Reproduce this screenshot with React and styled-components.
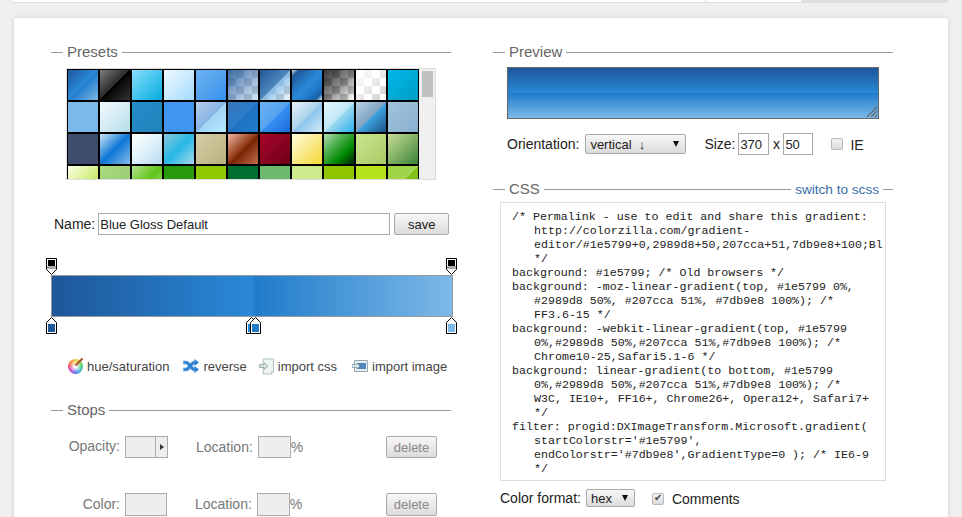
import React from 'react'
import styled, { createGlobalStyle } from 'styled-components'

const GlobalStyle = createGlobalStyle`
html, body {
	margin: 0;
	height: 517px;
	overflow: hidden;
	background: #efefef;
	font-family: "Liberation Sans", Arial, sans-serif;
	font-size: 14px;
	color: #222;
}
* { box-sizing: border-box; }
`

const checker = '#fff conic-gradient(#ccc 25%, #fff 0 50%, #ccc 0 75%, #fff 0) 0 0 / 16px 16px'

const presets = [
	'linear-gradient(135deg,#1e5799 0%,#2989d8 50%,#207cca 51%,#7db9e8 100%)',
	'linear-gradient(135deg,#7d7e7d 0%,#2a2a2a 49%,#000 50%,#0e0e0e 60%,#333 100%)',
	'linear-gradient(135deg,#87e0fd 0%,#53cbf1 40%,#05abe0 100%)',
	'linear-gradient(135deg,#f0f9ff 0%,#cbebff 47%,#a1dbff 100%)',
	'linear-gradient(135deg,#6db3f2 0%,#54a3ee 50%,#3690f0 100%)',
	`linear-gradient(135deg,rgba(30,87,153,.9) 0%,rgba(70,120,180,.6) 50%,rgba(125,185,232,.3) 100%),${checker}`,
	`linear-gradient(135deg,rgba(30,87,153,1) 0%,rgba(70,130,185,.95) 50%,rgba(125,185,232,.85) 51%,rgba(125,185,232,.1) 100%),${checker}`,
	'linear-gradient(135deg,#e4eef8 0%,#1e5799 12%,#2989d8 50%,#207cca 70%,#1a5fa5 88%,#eaf3fb 100%)',
	`linear-gradient(135deg,rgba(0,0,0,.8) 0%,rgba(0,0,0,.45) 50%,rgba(0,0,0,0) 100%),${checker}`,
	`linear-gradient(135deg,#fff 0%,rgba(255,255,255,.6) 50%,rgba(255,255,255,0) 100%),${checker}`,
	'linear-gradient(135deg,#00b7ea 0%,#009ec3 100%)',

	'linear-gradient(135deg,#7db9e8 0%,#7db9e8 100%)',
	'linear-gradient(135deg,#f3fbff 0%,#d5ecf3 50%,#b5dbe8 100%)',
	'linear-gradient(135deg,#258dc8 0%,#2183bd 100%)',
	'linear-gradient(135deg,#4096ee 0%,#4096ee 100%)',
	'linear-gradient(135deg,#b4cfe9 0%,#88b4e6 50%,#a0d4f6 51%,#b7eafb 100%)',
	'linear-gradient(135deg,#3b76b4 0%,#2a7ccb 50%,#1f72c4 51%,#1f7acc 100%)',
	'linear-gradient(135deg,#6db3f2 0%,#54a3ee 50%,#3690f0 51%,#1e69de 100%)',
	'linear-gradient(135deg,#ebf1f6 0%,#abd3ee 50%,#89c3eb 51%,#d5ebfb 100%)',
	'linear-gradient(135deg,#e4f5fc 0%,#bfe8f9 50%,#9fd8ef 51%,#2ab0ed 100%)',
	'linear-gradient(135deg,#bdd2e2 0%,#7ea3c5 50%,#3ea5e5 51%,#1a4f80 100%)',
	'linear-gradient(135deg,#a3c5dd 0%,#88b0d0 100%)',

	'#3f4c6b',
	'linear-gradient(135deg,#d0e4f7 0%,#73b1e7 24%,#0a77d5 50%,#539fe1 79%,#87bcea 100%)',
	'linear-gradient(135deg,#fff 0%,#dff1fb 50%,#b8d8f0 100%)',
	'linear-gradient(135deg,#88c8dc 0%,#28b8e6 50%,#a8d8e8 100%)',
	'linear-gradient(135deg,#d6cfa6 0%,#b9b17e 100%)',
	'linear-gradient(135deg,#f0b7a1 0%,#8c3310 50%,#752201 51%,#bf6e4e 100%)',
	'linear-gradient(135deg,#a90329 0%,#8f0222 44%,#6d0019 100%)',
	'linear-gradient(135deg,#fffde0 0%,#f9e98a 50%,#f5d936 100%)',
	'linear-gradient(135deg,#b4ddb4 0%,#83c783 17%,#52b152 33%,#008a00 67%,#005700 83%,#002400 100%)',
	'linear-gradient(135deg,#c9e58e 0%,#aacc66 100%)',
	'linear-gradient(135deg,#c9de96 0%,#8ab66b 44%,#398235 100%)',

	'linear-gradient(135deg,#f8ffe8 0%,#e3f5ab 33%,#b7df2d 100%)',
	'linear-gradient(135deg,#a9db80 0%,#96c56f 100%)',
	'linear-gradient(135deg,#b4e391 0%,#61c419 50%,#b4e391 100%)',
	'#299a0b',
	'#8fc800',
	'#006e2e',
	'#6db96f',
	'#cdeb8b',
	'#8fc400',
	'#b4e31c',
	'linear-gradient(135deg,#9dd53a 0%,#a1d54f 50%,#80c217 51%,#7cbc0a 100%)',
]

const barGradient = '#1e5799 0%,#2989d8 50%,#207cca 51%,#7db9e8 100%'

const opacityStops = [0, 100]
const colorStops = [
	{ at: 0, color: '#1e5799' },
	{ at: 50, color: '#2989d8' },
	{ at: 51, color: '#207cca' },
	{ at: 100, color: '#7db9e8' },
]

const cssRules = [
	"/* Permalink - use to edit and share this gradient: http://colorzilla.com/gradient-editor/#1e5799+0,2989d8+50,207cca+51,7db9e8+100;Blue+Gloss+Default */",
	'background: #1e5799; /* Old browsers */',
	'background: -moz-linear-gradient(top, #1e5799 0%, #2989d8 50%, #207cca 51%, #7db9e8 100%); /* FF3.6-15 */',
	'background: -webkit-linear-gradient(top, #1e5799 0%,#2989d8 50%,#207cca 51%,#7db9e8 100%); /* Chrome10-25,Safari5.1-6 */',
	'background: linear-gradient(to bottom, #1e5799 0%,#2989d8 50%,#207cca 51%,#7db9e8 100%); /* W3C, IE10+, FF16+, Chrome26+, Opera12+, Safari7+ */',
	"filter: progid:DXImageTransform.Microsoft.gradient( startColorstr='#1e5799', endColorstr='#7db9e8',GradientType=0 ); /* IE6-9 */",
]

const OpacityStop = ({ at }) => (
	<TopStop $at = {at} width = "11" height = "17" viewBox = "0 0 11 17">
		<path d = "M.5.5h10v11l-5 5-5-5z" fill = "#fff" stroke = "#000"/>
		<path d = "M2 2h7v6H2z" fill = "#000"/>
		<path d = "M1 8h9v3H1z" fill = "#aaa"/>
	</TopStop>
)

const ColorStop = ({ at, color }) => (
	<BottomStop $at = {at} width = "11" height = "17" viewBox = "0 0 11 17">
		<path d = "M.5 16.5v-11l5-5 5 5v11z" fill = "#fff" stroke = "#000"/>
		<path d = "M2 7h7v8H2z" fill = {color}/>
	</BottomStop>
)

const App = () => {
	return (
		<>
			<GlobalStyle/>
			<TopBar>
				<TopTab $width = {692}/>
				<TopTab $width = {96}/>
				<TopFill/>
			</TopBar>
			<Card>
				<Column>
					<SectionTitle><span>Presets</span></SectionTitle>
					<PresetBox>
						<PresetGrid>
							{presets.map((bg, i) => <Swatch key = {i} $bg = {bg}/>)}
						</PresetGrid>
						<PresetScroll><PresetThumb/></PresetScroll>
					</PresetBox>

					<NameRow>
						<label>Name:</label>
						<NameInput defaultValue = "Blue Gloss Default"/>
						<Button $width = {55}>save</Button>
					</NameRow>

					<Editor>
						{opacityStops.map(at => <OpacityStop key = {at} at = {at}/>)}
						<Bar/>
						{colorStops.map(s => <ColorStop key = {s.at} at = {s.at} color = {s.color}/>)}
					</Editor>

					<Actions>
						<Action $left = {17}>
							<HueIcon/>
							hue/saturation
						</Action>
						<Action $left = {14}>
							<svg width = "16" height = "14" viewBox = "0 0 16 14">
								<g fill = "none" stroke = "#9cc8ee" strokeWidth = "4">
									<path d = "M0 3.500h3c3.500 0 5 7 8.500 7H13"/>
									<path d = "M0 10.500h3c3.500 0 5-7 8.500-7H13"/>
								</g>
								<g fill = "none" stroke = "#2f80d4" strokeWidth = "2.600">
									<path d = "M.5 3.500H3c3.500 0 5 7 8.500 7H13"/>
									<path d = "M.5 10.500H3c3.500 0 5-7 8.500-7H13"/>
								</g>
								<path d = "M11.500 0 16 3.500 11.500 7zM11.500 7 16 10.500 11.500 14z" fill = "#2f80d4"/>
							</svg>
							reverse
						</Action>
						<Action $left = {12}>
							<svg width = "15" height = "17" viewBox = "0 0 16 17">
								<path d = "M4.500.5h11v14h-2v2h-9z" fill = "#eef3f3" stroke = "#a9bdbd"/>
								<path d = "M.5 6.500h5V4.500l4 3.500-4 3.500v-2h-5z" fill = "#dfe9e6" stroke = "#8ea8a4"/>
							</svg>
							import css
						</Action>
						<Action $left = {15}>
							<svg width = "16" height = "12" viewBox = "0 0 16 12">
								<path d = "M2.500.5h13v11h-13z" fill = "#e8eef2" stroke = "#9aaab5"/>
								<path d = "M5 3h9v6H5z" fill = "#4f86c0"/>
								<path d = "M0 4.500h5V3l3 3-3 3V7.500H0z" fill = "#dce8ee" stroke = "#5f7f95" strokeWidth = ".6"/>
							</svg>
							import image
						</Action>
					</Actions>

					<StopsTitle><span>Stops</span></StopsTitle>
					<StopRow>
						<StopLabel>Opacity:</StopLabel>
						<OpacityBox><OpacityArrow/></OpacityBox>
						<LocationLabel>Location:</LocationLabel>
						<LocationBox/>
						<Unit>%</Unit>
						<DeleteButton>delete</DeleteButton>
					</StopRow>
					<ColorRow>
						<StopLabel>Color:</StopLabel>
						<ColorBox/>
						<LocationLabel>Location:</LocationLabel>
						<LocationBox/>
						<Unit>%</Unit>
						<DeleteButton>delete</DeleteButton>
					</ColorRow>
				</Column>

				<Column>
					<SectionTitle><span>Preview</span></SectionTitle>
					<Preview>
						<svg width = "12" height = "12" viewBox = "0 0 12 12">
							<path d = "M1 11 11 1M5 11l6-6M9 11l2-2" stroke = "#666" strokeWidth = "1.100" fill = "none"/>
						</svg>
					</Preview>

					<OptionsRow>
						<label>Orientation:</label>
						<SelectWrap $width = {101} $left = {6} $top = {7}>
							<Select defaultValue = "vertical">
								<option value = "vertical">vertical &nbsp;↓</option>
							</Select>
						</SelectWrap>
						<SizeLabel>Size:</SizeLabel>
						<SizeInput $width = {31} defaultValue = "370"/>
						<SizeSep>x</SizeSep>
						<SizeInput $width = {30} defaultValue = "50"/>
						<IeCheck type = "checkbox"/>
						<CheckLabel>IE</CheckLabel>
					</OptionsRow>

					<CssTitle>
						<span>CSS</span>
						<SwitchLink href = "#">switch to scss</SwitchLink>
					</CssTitle>
					<CssBox>
						{cssRules.map((rule, i) => <CssRule key = {i}>{rule}</CssRule>)}
					</CssBox>

					<FormatRow>
						<label>Color format:</label>
						<SelectWrap $width = {49} $left = {5} $top = {6}>
							<Select defaultValue = "hex">
								<option value = "hex">hex</option>
							</Select>
						</SelectWrap>
						<CommentsCheck type = "checkbox" defaultChecked/>
						<CheckLabel>Comments</CheckLabel>
					</FormatRow>
				</Column>
			</Card>
		</>
	)
}

const TopBar = styled.div`
display: flex;
height: 3px;
margin: 0 14px;
`

const TopTab = styled.div`
width: ${p => p.$width}px;
background: #fff;
border-right: 1px solid #ddd;
border-bottom: 1px solid #ddd;
`

const TopFill = styled.div`
flex: 1;
background: #e0e0e0;
`

const Card = styled.div`
display: grid;
grid-template-columns: 400px 400px;
column-gap: 42px;
align-items: start;
height: 600px;
margin: 15px 14px 0;
padding: 26px 0 0 37px;
background: #fff;
border-radius: 2px;
box-shadow: 0 0 4px rgba(0, 0, 0, .16);
`

const Column = styled.div`
display: flex;
flex-direction: column;
`

//Titres de section

const SectionTitle = styled.div`
display: flex;
align-items: center;
height: 16px;
font-size: 15px;
color: #666;

> span {
	margin-top: -2px;
}
&::before {
	content: '';
	width: 12px;
	height: 1px;
	margin-right: 4px;
	background: #999;
}
&::after {
	content: '';
	flex: 1;
	height: 1px;
	margin-left: 4px;
	background: #999;
}
`

const StopsTitle = styled(SectionTitle)`
margin-top: 28px;
`

const CssTitle = styled(SectionTitle)`
margin-top: 26px;

&::after {
	flex: 0 0 10px;
}
`

const SwitchLink = styled.a`
display: flex;
flex: 1;
align-items: center;
margin-left: 4px;
font-size: 13.6px;
color: #3a6ea8;
text-decoration: none;

&::before {
	content: '';
	flex: 1;
	height: 1px;
	margin-right: 4px;
	background: #999;
}
`

//Presets

const PresetBox = styled.div`
display: flex;
width: 370px;
height: 112px;
margin: 8px 0 0 15px;
border: 1px solid #ddd;
overflow: hidden;
`

const PresetGrid = styled.div`
display: grid;
grid-template-columns: repeat(11, 30px);
grid-auto-rows: 30px;
gap: 2px;
width: 352px;
padding: 1px 0 0 1px;
margin-bottom: -30px;
background: #000;
`

const Swatch = styled.div`
background: ${p => p.$bg};
`

const PresetScroll = styled.div`
flex: 1;
padding: 2px 2px 0 3px;
background: #f0f0f0;
`

const PresetThumb = styled.div`
height: 26px;
background: #c1c1c1;
`

//Nom

const NameRow = styled.div`
display: flex;
align-items: center;
height: 22px;
margin-top: 33px;
padding-left: 3px;
`

const TextInput = styled.input`
height: 22px;
padding: 0 1px;
border: 1px solid #aaa;
background: #fff;
font: 13px "Liberation Sans", Arial, sans-serif;
color: #222;
outline: none;
`

const NameInput = styled(TextInput)`
width: 292px;
margin: 0 4px 0 3px;
`

const Button = styled.button`
width: ${p => p.$width}px;
height: 22px;
padding: 0;
border: 1px solid #aaa;
border-radius: 2px;
background: linear-gradient(#f7f7f7, #dcdcdc);
font: 13px "Liberation Sans", Arial, sans-serif;
color: #222;
`

//Barre de dégradé

const Editor = styled.div`
position: relative;
width: 402px;
height: 76px;
margin-top: 23px;
padding-top: 17px;
`

const Bar = styled.div`
height: 42px;
border: 1px solid #999;
background: linear-gradient(to right, ${barGradient});
`

const TopStop = styled.svg`
position: absolute;
top: 0;
left: ${p => p.$at * 4 - 5}px;
display: block;
`

const BottomStop = styled.svg`
position: absolute;
bottom: 0;
left: ${p => p.$at * 4 - 5}px;
display: block;
`

const Actions = styled.div`
display: flex;
align-items: center;
height: 16px;
margin-top: 24px;
`

const Action = styled.a`
display: flex;
align-items: center;
gap: 4px;
margin-left: ${p => p.$left}px;
font-size: 13px;
color: #444;
white-space: nowrap;
`

const HueIcon = styled.span`
position: relative;
width: 15px;
height: 15px;
border-radius: 50%;
background:
	radial-gradient(circle, #fff 0 10%, transparent 60%),
	conic-gradient(#f6d34a, #9bd53f, #3fc97a, #3fb7e0, #5b6fe0, #c44fd0, #e8507a, #f08a3a, #f6d34a);

&::after {
	content: '';
	position: absolute;
	top: 2px;
	left: 6px;
	width: 10px;
	height: 2px;
	background: #a8503a;
	transform: rotate(-45deg);
}
`

//Stops

const StopRow = styled.div`
display: flex;
align-items: center;
height: 22px;
margin-top: 18px;
padding-right: 14px;
color: #777;
`

const ColorRow = styled(StopRow)`
height: 23px;
margin-top: 35px;

& > label, & > span {
	margin-top: -2px;
}
`

const StopLabel = styled.label`
width: 69px;
margin: -2px 5px 0 0;
text-align: right;
`

const EmptyBox = styled.div`
height: 100%;
border: 1px solid #aaa;
background: #eee;
`

const OpacityBox = styled(EmptyBox)`
display: flex;
justify-content: flex-end;
width: 43px;
`

const OpacityArrow = styled.span`
display: flex;
align-items: center;
justify-content: center;
width: 12px;
border-left: 1px solid #aaa;

&::after {
	content: '';
	border-left: 4px solid #333;
	border-top: 3px solid transparent;
	border-bottom: 3px solid transparent;
}
`

const ColorBox = styled(EmptyBox)`
width: 42px;
`

const LocationLabel = styled.label`
margin: 0 5px 0 28px;
`

const LocationBox = styled(EmptyBox)`
width: 33px;
`

const Unit = styled.span``

const DeleteButton = styled(Button)`
width: 51px;
height: 100%;
margin-left: auto;
color: #888;
`

//Preview

const Preview = styled.div`
display: flex;
align-items: flex-end;
justify-content: flex-end;
width: 372px;
height: 52px;
margin: 7px 0 0 14px;
border: 1px solid #666;
background: linear-gradient(to bottom, ${barGradient});
`

const OptionsRow = styled.div`
display: flex;
align-items: center;
height: 22px;
margin-top: 14px;
padding-left: 14px;
`

const SelectWrap = styled.div`
position: relative;
width: ${p => p.$width}px;
height: 20px;
margin-left: ${p => p.$left}px;

&::after {
	content: '';
	position: absolute;
	top: ${p => p.$top}px;
	right: 7px;
	border-top: 6px solid #111;
	border-left: 3.5px solid transparent;
	border-right: 3.5px solid transparent;
	pointer-events: none;
}
`

const Select = styled.select`
appearance: none;
width: 100%;
height: 100%;
padding: 0 0 0 4px;
border: 1px solid #aaa;
border-radius: 2px;
background: linear-gradient(#f7f7f7, #dcdcdc);
font: 13px "Liberation Sans", Arial, sans-serif;
color: #222;
`

const SizeLabel = styled.label`
width: 34px;
margin-left: 18px;
`

const SizeInput = styled(TextInput)`
width: ${p => p.$width}px;
`

const SizeSep = styled.span`
width: 14px;
text-align: center;
`

const CheckBox = styled.input`
appearance: none;
width: 12px;
height: 12px;
margin: 0;
border: 1px solid #bbb;
border-radius: 2px;
background: linear-gradient(#f2f2f2, #dcdcdc);
`

const IeCheck = styled(CheckBox)`
margin: 0 7px 0 18px;
`

const CheckLabel = styled.label`
margin-top: 2px;
`

const CommentsCheck = styled(CheckBox)`
position: relative;
margin: 2px 8px 0 17px;

&::after {
	content: '✔';
	position: absolute;
	top: -2px;
	left: 1px;
	font: 10px "DejaVu Sans", sans-serif;
	color: #444;
}
`

//CSS

const CssBox = styled.div`
width: 386px;
height: 279px;
margin: 5px 0 0 7px;
padding: 7px 0 0 11px;
border: 1px solid #ddd;
overflow: hidden;
font: 11.64px/14px "Liberation Mono", "Courier New", monospace;
color: #222;
`

const CssRule = styled.div`
width: 371px;
padding: 0 11px 0 22px;
text-indent: -22px;
overflow: hidden;
`

const FormatRow = styled.div`
display: flex;
align-items: center;
height: 18px;
margin: 8px 0 0 7px;

${SelectWrap} {
	height: 18px;
}
`

export default App
